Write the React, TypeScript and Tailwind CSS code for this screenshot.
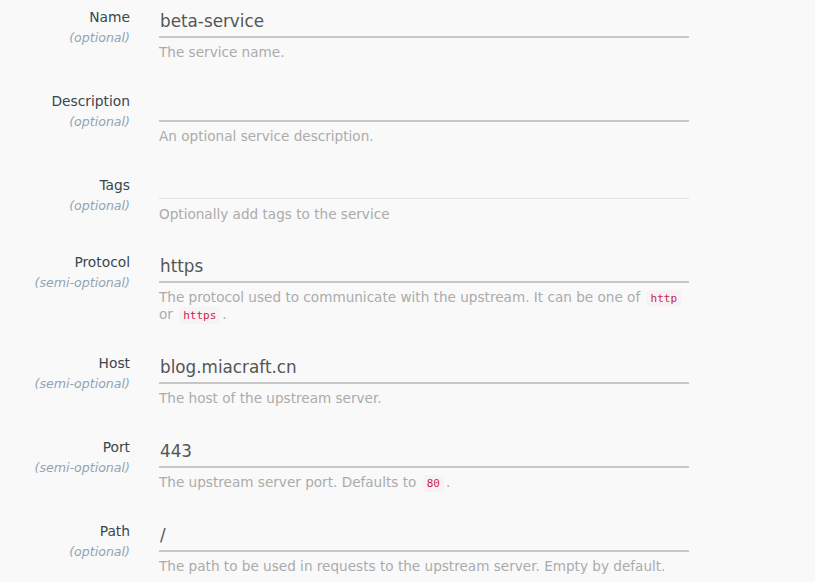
import React from "react";

type Field = {
  label: string;
  hint: string;
  value: string;
  help: React.ReactNode;
  thin?: boolean;
};

const Code = ({ children }: { children: React.ReactNode }) => (
  <code className="mx-[2px] rounded-[3px] bg-[#f9f2f4] px-[4px] py-[2px] font-['DejaVu_Sans_Mono',monospace] text-[11px] leading-none text-[#c7254e]">
    {children}
  </code>
);

const fields: Field[] = [
  { label: "Name", hint: "(optional)", value: "beta-service", help: "The service name." },
  { label: "Description", hint: "(optional)", value: "", help: "An optional service description." },
  { label: "Tags", hint: "(optional)", value: "", help: "Optionally add tags to the service", thin: true },
  {
    label: "Protocol",
    hint: "(semi-optional)",
    value: "https",
    help: (
      <>
        The protocol used to communicate with the upstream. It can be one of <Code>http</Code>
        <br />
        or <Code>https</Code>.
      </>
    ),
  },
  { label: "Host", hint: "(semi-optional)", value: "blog.miacraft.cn", help: "The host of the upstream server." },
  {
    label: "Port",
    hint: "(semi-optional)",
    value: "443",
    help: (
      <>
        The upstream server port. Defaults to <Code>80</Code>.
      </>
    ),
  },
  { label: "Path", hint: "(optional)", value: "/", help: "The path to be used in requests to the upstream server. Empty by default." },
];

export default function App() {
  return (
    <div className="min-h-[582px] w-full bg-[#f9f9f9] font-['DejaVu_Sans',sans-serif]">
      {fields.map((f, i) => (
        <div key={i} className={`flex ${f.thin ? "mb-[22px]" : "mb-[23px]"}`}>
          <div className="w-[130px] shrink-0 pt-[7px] text-right">
            <div className="text-[13.8px] leading-[20px] text-[#37474f]">{f.label}</div>
            <div className="text-[12.6px] leading-[22px] italic text-[#90a4b4]">{f.hint}</div>
          </div>
          <div className="ml-[29px] w-[530px]">
            {f.thin ? (
              <div className="h-[31px] border-b border-[#e2e2e2]" />
            ) : (
              <div className="h-[38px] border-b-2 border-[#c6c6c6] pt-[5px] pl-[1px] text-[16.8px] leading-[32px] text-[#555]">
                {f.value}
              </div>
            )}
            <div className={`${f.thin ? "mt-[7px]" : "mt-[6px]"} text-[13.6px] leading-[17px] text-[#ababab]`}>
              {f.help}
            </div>
          </div>
        </div>
      ))}
    </div>
  );
}
